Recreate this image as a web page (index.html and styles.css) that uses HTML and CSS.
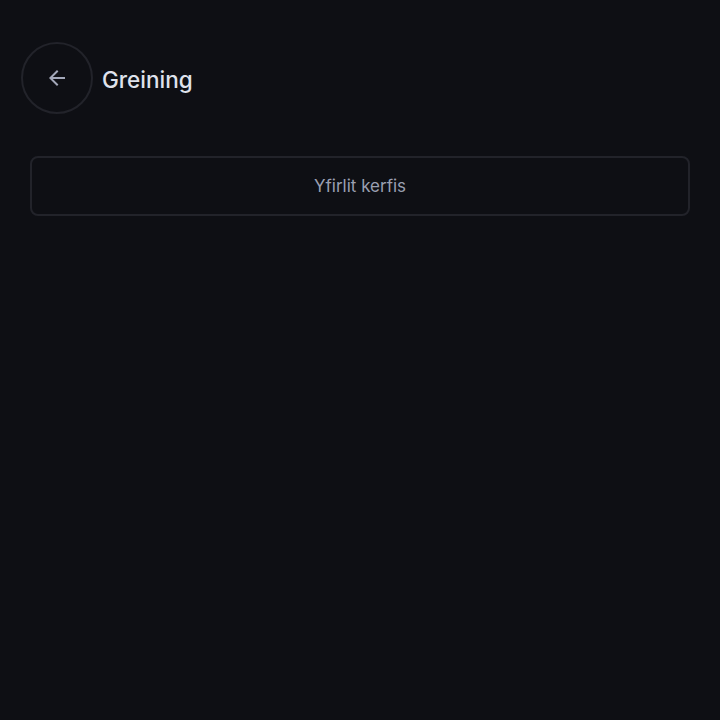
FILE: index.html
```html
<!DOCTYPE html>
<html lang="is">
<head>
<meta charset="utf-8">
<title>Greining</title>
<link rel="stylesheet" href="styles.css">
</head>
<body>
<div class="page">
  <header class="header">
    <button class="back" aria-label="Til baka">
      <svg width="24" height="24" viewBox="0 0 24 24"><path d="M20 11H7.83l5.59-5.59L12 4l-8 8 8 8 1.41-1.41L7.83 13H20v-2z" fill="currentColor"/></svg>
    </button>
    <h1 class="title">Greining</h1>
  </header>
  <div class="card">Yfirlit kerfis</div>
</div>
</body>
</html>
```
FILE: styles.css
```css
html, body {
  margin: 0;
  padding: 0;
  background: #0e0f14;
  height: 100%;
}
body {
  font-family: "Inter", "Roboto", sans-serif;
}
.page {
  padding: 42px 30px 0 21px;
}
.header {
  display: flex;
  align-items: center;
  gap: 9px;
}
.back {
  width: 72px;
  height: 72px;
  border-radius: 50%;
  border: 2px solid #22232a;
  background: transparent;
  color: #a3a8b9;
  display: flex;
  align-items: center;
  justify-content: center;
  padding: 0;
  box-sizing: border-box;
}
.title {
  margin: 2px 0 0;
  font-size: 22.5px;
  font-weight: 500;
  color: #dfe2ec;
  letter-spacing: 0;
}
.card {
  margin: 42px 0 0 9px;
  height: 60px;
  box-sizing: border-box;
  border: 2px solid #22232a;
  border-radius: 8px;
  display: flex;
  align-items: center;
  justify-content: center;
  font-size: 17px;
  color: #9a9fb1;
}
```
